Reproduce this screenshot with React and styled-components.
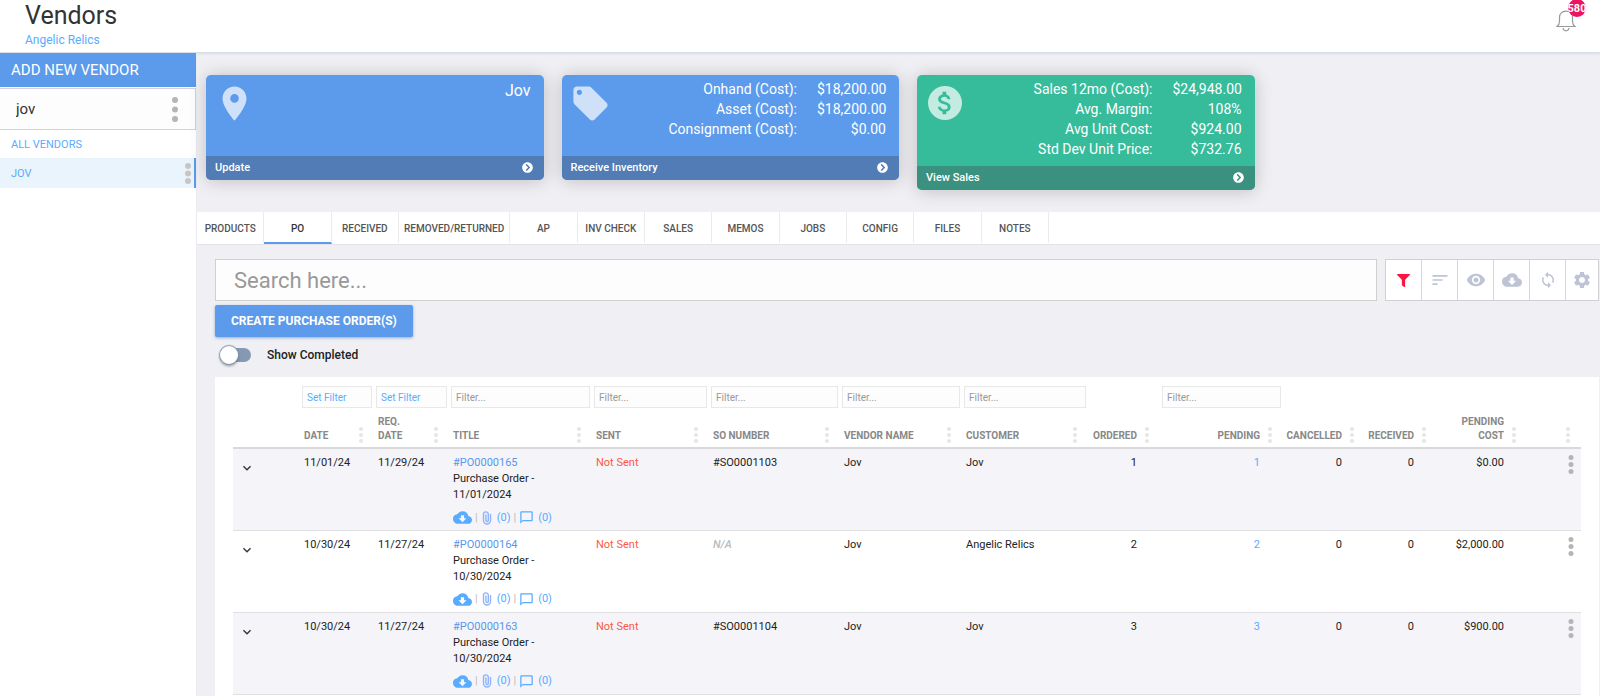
import React from 'react'
import styled, { createGlobalStyle, css } from 'styled-components'
import {
  MdPlace,
  MdLocalOffer,
  MdAttachMoney,
  MdSort,
  MdVisibility,
  MdCloudDownload,
  MdSync,
  MdSettings,
  MdChatBubbleOutline,
  MdKeyboardArrowDown,
} from 'react-icons/md'
import { FaChevronCircleRight, FaFilter } from 'react-icons/fa'

const GlobalStyle = createGlobalStyle`
  * { box-sizing: border-box; }
  html { scrollbar-width: none; }
  body {
    margin: 0;
    background: #efeff4;
    color: #222;
    font-family: Roboto, "Liberation Sans", sans-serif;
    font-size: 12px;
    line-height: 16px;
  }
  button, input { font-family: inherit; }
  button { cursor: pointer; }
  a { color: inherit; text-decoration: none; }
  svg { display: block; flex: none; }
`

const blue = '#5c9aeb'
const link = '#58acff'

const cards = [
  { icon: MdPlace, title: 'Jov', action: 'Update' },
  {
    icon: MdLocalOffer,
    action: 'Receive Inventory',
    stats: [
      ['Onhand (Cost):', '$18,200.00'],
      ['Asset (Cost):', '$18,200.00'],
      ['Consignment (Cost):', '$0.00'],
    ],
  },
  {
    action: 'View Sales',
    green: true,
    stats: [
      ['Sales 12mo (Cost):', '$24,948.00'],
      ['Avg. Margin:', '108%'],
      ['Avg Unit Cost:', '$924.00'],
      ['Std Dev Unit Price:', '$732.76'],
    ],
  },
]

const tabs = [
  'PRODUCTS', 'PO', 'RECEIVED', 'REMOVED/RETURNED', 'AP', 'INV CHECK',
  'SALES', 'MEMOS', 'JOBS', 'CONFIG', 'FILES', 'NOTES',
]

const tools = [
  { label: 'Filter', icon: FaFilter, size: 13, active: true },
  { label: 'Sort', icon: MdSort, size: 20 },
  { label: 'Visibility', icon: MdVisibility, size: 20 },
  { label: 'Download', icon: MdCloudDownload, size: 20 },
  { label: 'Refresh', icon: MdSync, size: 18 },
  { label: 'Settings', icon: MdSettings, size: 20 },
]

const columns = [
  { key: 'expand', width: 67 },
  { key: 'date', label: 'DATE', width: 74, filter: 'button' },
  { key: 'reqDate', label: 'REQ. DATE', width: 75, filter: 'button' },
  { key: 'title', label: 'TITLE', width: 143, filter: 'text' },
  { key: 'sent', label: 'SENT', width: 117, filter: 'text' },
  { key: 'so', label: 'SO NUMBER', width: 131, filter: 'text' },
  { key: 'vendor', label: 'VENDOR NAME', width: 122, filter: 'text' },
  { key: 'customer', label: 'CUSTOMER', width: 126, filter: 'text' },
  { key: 'ordered', label: 'ORDERED', width: 72, right: true },
  { key: 'pending', label: 'PENDING', width: 123, right: true, filter: 'text' },
  { key: 'cancelled', label: 'CANCELLED', width: 82, right: true },
  { key: 'received', label: 'RECEIVED', width: 72, right: true },
  { key: 'cost', label: 'PENDING COST', width: 90, right: true },
  { key: 'actions', label: '', width: 54 },
]

const orders = [
  { po: '#PO0000165', date: '11/01/24', reqDate: '11/29/24', day: '11/01/2024', so: '#SO0001103', customer: 'Jov', qty: 1, cost: '$0.00' },
  { po: '#PO0000164', date: '10/30/24', reqDate: '11/27/24', day: '10/30/2024', so: null, customer: 'Angelic Relics', qty: 2, cost: '$2,000.00' },
  { po: '#PO0000163', date: '10/30/24', reqDate: '11/27/24', day: '10/30/2024', so: '#SO0001104', customer: 'Jov', qty: 3, cost: '$900.00' },
]

function Dots({ width = 6, height = 20, r = 3, color = '#b5b5b5' }) {
  return (
    <svg width={width} height={height} viewBox={`0 0 ${width} ${height}`} fill={color} aria-hidden="true">
      <circle cx={width / 2} cy={r} r={r} />
      <circle cx={width / 2} cy={height / 2} r={r} />
      <circle cx={width / 2} cy={height - r} r={r} />
    </svg>
  )
}

function Bell() {
  return (
    <svg width="20" height="22" viewBox="0 0 20 22" fill="none" stroke="#999" strokeWidth="1.2" aria-hidden="true">
      <path d="M1 16.5h18c-1.700-1.200-2.500-2.500-2.500-5V7.500C16.500 3.600 14 1.200 10 1.200S3.500 3.600 3.500 7.500v4c0 2.500-.8 3.800-2.500 5z" />
      <path d="M7 18c.3 1.800 1.500 2.800 3 2.800s2.700-1 3-2.800" />
    </svg>
  )
}

function Paperclip() {
  return (
    <svg width="12" height="14" viewBox="0 0 12 14" fill="none" stroke="#8fb4fc" strokeWidth="1.4" strokeLinecap="round" aria-hidden="true">
      <path d="M9.500 3.500v6a3.500 3.500 0 0 1-7 0V3.300a2.400 2.400 0 0 1 4.800 0v6a1.200 1.200 0 0 1-2.400 0V4" />
    </svg>
  )
}

function VendorCard({ icon: Icon, title, stats, action, green }) {
  return (
    <Card $green={green}>
      <CardBody>
        {Icon ? <Icon size={41} opacity={0.7} /> : <Coin><MdAttachMoney size={30} /></Coin>}
        {title && <CardTitle>{title}</CardTitle>}
        {stats && (
          <Stats>
            {stats.map(([name, value]) => (
              <React.Fragment key={name}>
                <dt>{name}</dt>
                <dd>{value}</dd>
              </React.Fragment>
            ))}
          </Stats>
        )}
      </CardBody>
      <CardAction href="#" $green={green}>
        {action}
        <FaChevronCircleRight size={11} />
      </CardAction>
    </Card>
  )
}

function OrderRow({ order }) {
  return (
    <tr>
      <Cell>
        <ExpandButton aria-label={`Expand ${order.po}`}>
          <MdKeyboardArrowDown size={16} />
        </ExpandButton>
      </Cell>
      <Cell>{order.date}</Cell>
      <Cell>{order.reqDate}</Cell>
      <Cell>
        <OrderLink href="#">{order.po}</OrderLink>
        <OrderName>Purchase Order - {order.day}</OrderName>
        <OrderIcons>
          <a href="#" aria-label="Download"><MdCloudDownload size={19} /></a>
          <i>|</i>
          <a href="#"><Paperclip />(0)</a>
          <i>|</i>
          <a href="#"><MdChatBubbleOutline size={15} />(0)</a>
        </OrderIcons>
      </Cell>
      <Cell><NotSent>Not Sent</NotSent></Cell>
      <Cell>{order.so || <Missing>N/A</Missing>}</Cell>
      <Cell>Jov</Cell>
      <Cell>{order.customer}</Cell>
      <Cell $right>{order.qty}</Cell>
      <Cell $right><PendingLink href="#">{order.qty}</PendingLink></Cell>
      <Cell $right>0</Cell>
      <Cell $right>0</Cell>
      <Cell $right>{order.cost}</Cell>
      <Cell>
        <RowMenu aria-label={`Actions for ${order.po}`}>
          <Dots width={6} height={19} r={2.5} />
        </RowMenu>
      </Cell>
    </tr>
  )
}

export default function App() {
  return (
    <>
      <GlobalStyle />
      <Header>
        <div>
          <PageTitle>Vendors</PageTitle>
          <CompanyLink href="#">Angelic Relics</CompanyLink>
        </div>
        <BellButton aria-label="Notifications">
          <Bell />
          <Badge>580</Badge>
        </BellButton>
      </Header>

      <Shell>
        <Sidebar>
          <AddButton>ADD NEW VENDOR</AddButton>
          <VendorSearch>
            <input type="text" aria-label="Search vendors" defaultValue="jov" />
            <IconButton aria-label="Search options"><Dots height={25} /></IconButton>
          </VendorSearch>
          <VendorItem><a href="#">ALL VENDORS</a></VendorItem>
          <VendorItem $active>
            <a href="#">JOV</a>
            <IconButton aria-label="Vendor options"><Dots height={21} color="#c6c6c6" /></IconButton>
          </VendorItem>
        </Sidebar>

        <Main>
          <Cards>
            {cards.map((card) => <VendorCard key={card.action} {...card} />)}
          </Cards>

          <TabBar role="tablist">
            {tabs.map((tab) => (
              <Tab key={tab} role="tab" aria-selected={tab === 'PO'} $active={tab === 'PO'}>{tab}</Tab>
            ))}
          </TabBar>

          <Toolbar>
            <SearchInput type="text" placeholder="Search here..." aria-label="Search" />
            <ToolGroup>
              {tools.map(({ label, icon: Icon, size, active }) => (
                <ToolButton key={label} aria-label={label} $active={active}>
                  <Icon size={size} />
                </ToolButton>
              ))}
            </ToolGroup>
          </Toolbar>

          <CreateButton>CREATE PURCHASE ORDER(S)</CreateButton>
          <SwitchLabel>
            <Switch type="checkbox" />
            Show Completed
          </SwitchLabel>

          <Panel>
            <Table>
              <colgroup>
                {columns.map((col) => <col key={col.key} width={col.width} />)}
              </colgroup>
              <thead>
                <tr>
                  {columns.map((col) => (
                    <FilterCell key={col.key}>
                      {col.filter === 'button' && <FilterButton>Set Filter</FilterButton>}
                      {col.filter === 'text' && (
                        <FilterInput type="text" placeholder="Filter..." aria-label={`Filter ${col.label}`} />
                      )}
                    </FilterCell>
                  ))}
                </tr>
                <tr>
                  {columns.map((col) => (
                    <HeadCell key={col.key} scope="col">
                      {col.key !== 'expand' && (
                        <HeadLabel $right={col.right}>
                          <span>{col.label}</span>
                          <Dots width={4} height={16} r={2} color="#e6e6e6" />
                        </HeadLabel>
                      )}
                    </HeadCell>
                  ))}
                </tr>
              </thead>
              <tbody>
                {orders.map((order) => <OrderRow key={order.po} order={order} />)}
              </tbody>
            </Table>
          </Panel>
        </Main>
      </Shell>
    </>
  )
}

const Header = styled.header`
  display: flex;
  justify-content: space-between;
  height: 53px;
  padding: 0 24px 0 25px;
  background: #fff;
  border-bottom: 1px solid #d9e0ea;
  box-shadow: 0 1px 2px rgba(140, 165, 200, 0.25);
`

const PageTitle = styled.h1`
  margin: 0;
  color: #333;
  font-size: 25px;
  font-weight: 400;
  line-height: 32px;
`

const CompanyLink = styled.a`
  display: block;
  color: ${link};
  font-size: 12px;
`

const BellButton = styled.button`
  position: relative;
  align-self: flex-start;
  margin-top: 10px;
  padding: 0;
  border: 0;
  background: none;
`

const Badge = styled.span`
  position: absolute;
  top: -11px;
  left: 12px;
  display: flex;
  align-items: center;
  justify-content: center;
  width: 18px;
  height: 18px;
  border-radius: 50%;
  background: #eb1562;
  color: #fff;
  font-size: 11px;
  font-weight: 700;
`

const Shell = styled.div`
  display: flex;
`

const Sidebar = styled.aside`
  flex: none;
  width: 197px;
  min-height: calc(100vh - 53px);
  background: #fff;
  border-right: 1px solid #e8ecf2;
`

const AddButton = styled.button`
  display: block;
  width: 100%;
  height: 34px;
  padding: 0 11px;
  border: 0;
  background: ${blue};
  color: #fff;
  font-size: 15px;
  text-align: left;
`

const IconButton = styled.button`
  padding: 0;
  border: 0;
  background: none;
`

const VendorSearch = styled.div`
  display: flex;
  align-items: center;
  height: 42px;
  margin-top: 1px;
  padding: 0 17px 0 16px;
  background: #fdfdfd;
  border: 1px solid #d3d3d3;
  border-left: 0;

  input {
    flex: 1;
    min-width: 0;
    padding: 0;
    border: 0;
    outline: none;
    background: none;
    color: #333;
    font-size: 15px;
  }
`

const VendorItem = styled.div`
  display: flex;
  align-items: center;
  justify-content: space-between;
  height: 28px;
  padding: 1px 3px 0 11px;
  color: ${link};
  font-size: 11px;

  ${({ $active }) => $active && css`
    height: 30px;
    background: #eaf4fd;
    border-right: 2px solid ${blue};
  `}
`

const Main = styled.main`
  flex: 1;
  min-width: 0;
`

const Cards = styled.section`
  display: flex;
  align-items: flex-start;
  gap: 18px;
  padding: 22px 0 22px 9px;
`

const Card = styled.article`
  width: calc(25% - 11px);
  border-radius: 5px;
  overflow: hidden;
  background: ${({ $green }) => ($green ? '#36bb9b' : blue)};
  color: #fff;
  box-shadow: 0 1px 18px rgba(0, 0, 0, 0.2);
`

const CardBody = styled.div`
  display: flex;
  align-items: flex-start;
  justify-content: space-between;
  min-height: 81px;
  padding: 4px 13px 7px 8px;

  > svg { margin-top: 4px; }
`

const Coin = styled.span`
  display: flex;
  align-items: center;
  justify-content: center;
  width: 34px;
  height: 34px;
  margin: 7px 0 0 3px;
  border-radius: 50%;
  background: rgba(255, 255, 255, 0.7);
  color: #36bb9b;
`

const CardTitle = styled.h2`
  margin: 0;
  font-size: 16px;
  font-weight: 400;
  line-height: 24px;
`

const Stats = styled.dl`
  display: grid;
  grid-template-columns: auto 69px;
  column-gap: 20px;
  margin: 0;
  font-size: 14px;
  line-height: 20px;
  text-align: right;

  dd { margin: 0; }
`

const CardAction = styled.a`
  display: flex;
  align-items: center;
  justify-content: space-between;
  height: 24px;
  padding: 0 11px 1px 9px;
  background: ${({ $green }) => ($green ? '#3b917f' : '#517cb5')};
  font-size: 11px;
  font-weight: 500;
`

const TabBar = styled.nav`
  display: flex;
  height: 33px;
  background: #fff;
  border-bottom: 1px solid #e4e4e8;
`

const Tab = styled.button`
  min-width: 4.8%;
  padding: 3px 5px 0;
  border: 0;
  border-right: 1px solid #ebebeb;
  border-bottom: 2px solid ${({ $active }) => ($active ? blue : 'transparent')};
  background: none;
  color: ${({ $active }) => ($active ? '#333' : '#555')};
  font-size: 10px;
  font-weight: 500;
`

const Toolbar = styled.div`
  display: flex;
  gap: 8px;
  padding: 14px 1px 4px 18px;
`

const SearchInput = styled.input`
  flex: 1;
  min-width: 0;
  height: 42px;
  padding: 0 18px;
  border: 1px solid #cfcfcf;
  background: #fdfdfd;
  font-size: 22px;
  outline: none;

  &::placeholder { color: #999; }
`

const ToolGroup = styled.div`
  display: flex;
  border: 1px solid #cfcfd4;
`

const ToolButton = styled.button`
  display: flex;
  align-items: center;
  justify-content: center;
  width: 36px;
  padding: 0;
  border: 0;
  border-right: 1px solid #d6d6da;
  background: #fff;
  color: ${({ $active }) => ($active ? '#ff1440' : '#bfc3d6')};

  &:last-child { width: 32px; border-right: 0; }
`

const CreateButton = styled.button`
  display: block;
  height: 32px;
  margin-left: 18px;
  padding: 0 16px;
  border: 0;
  border-radius: 2px;
  background: ${blue};
  color: #fff;
  font-size: 12px;
  font-weight: 700;
  box-shadow: 0 1px 3px rgba(60, 110, 180, 0.5);
`

const SwitchLabel = styled.label`
  display: flex;
  align-items: center;
  gap: 16px;
  width: max-content;
  margin: 8px 0 12px 23px;
  font-weight: 500;
  line-height: 20px;
`

const Switch = styled.input`
  appearance: none;
  position: relative;
  width: 31px;
  height: 14px;
  margin: 0;
  border-radius: 7px;
  background: #8699b3;

  &::before {
    content: '';
    position: absolute;
    top: -2px;
    left: 0;
    width: 18px;
    height: 18px;
    border-radius: 50%;
    background: #fff;
    box-shadow: 0 0 1px 1px #8699b3, 0 2px 3px rgba(0, 0, 0, 0.4);
  }

  &:checked::before { left: 13px; }
`

const Panel = styled.section`
  margin: 0 1px 0 18px;
  padding: 9px 18px;
  background: #fff;
`

const Table = styled.table`
  width: 100%;
  table-layout: fixed;
  border-collapse: collapse;
  font-size: 11px;

  tbody tr:nth-child(odd) { background: #f4f4f9; }
`

const FilterCell = styled.td`
  height: 22px;
  padding: 0 2px;
`

const filterBox = css`
  display: block;
  width: 100%;
  height: 22px;
  padding: 0 4px;
  border: 1px solid #e8e8e8;
  background: #fdfdfd;
  font-size: 10px;
  text-align: left;
  outline: none;
`

const FilterButton = styled.button`
  ${filterBox}
  color: ${link};
`

const FilterInput = styled.input`
  ${filterBox}
  &::placeholder { color: #999; }
`

const HeadCell = styled.th`
  padding: 7px 11px 4px 4px;
  border-bottom: 2px solid #d9d9d9;
  color: #888;
  font-size: 10px;
  font-weight: 700;
  line-height: 14px;
  text-align: left;
  vertical-align: bottom;
`

const HeadLabel = styled.div`
  display: flex;
  align-items: flex-end;
  justify-content: ${({ $right }) => ($right ? 'flex-end' : 'space-between')};
  gap: 8px;
  text-align: ${({ $right }) => ($right ? 'right' : 'left')};
`

const Cell = styled.td`
  height: 82px;
  padding: 6px ${({ $right }) => ($right ? '23px' : '4px')} 0 4px;
  border-bottom: 1px solid #e0e0e2;
  text-align: ${({ $right }) => ($right ? 'right' : 'left')};
  vertical-align: top;
`

const ExpandButton = styled.button`
  display: block;
  margin: 5px 0 0 2px;
  padding: 0;
  border: 0;
  background: none;
  color: #333;
`

const RowMenu = styled.button`
  display: block;
  margin: 0 3px 0 auto;
  padding: 0;
  border: 0;
  background: none;
`

const OrderLink = styled.a`
  display: block;
  color: #5b96ea;
`

const OrderName = styled.div`
  max-width: 100px;
`

const OrderIcons = styled.div`
  display: flex;
  align-items: center;
  gap: 3px;
  margin-top: 5px;
  color: ${link};

  a { display: flex; align-items: center; gap: 4px; }
  i { color: #bbb; font-style: normal; }
`

const NotSent = styled.span`
  color: #fb5a43;
`

const Missing = styled.em`
  color: #bbb;
  font-weight: 500;
`

const PendingLink = styled.a`
  color: ${link};
`
